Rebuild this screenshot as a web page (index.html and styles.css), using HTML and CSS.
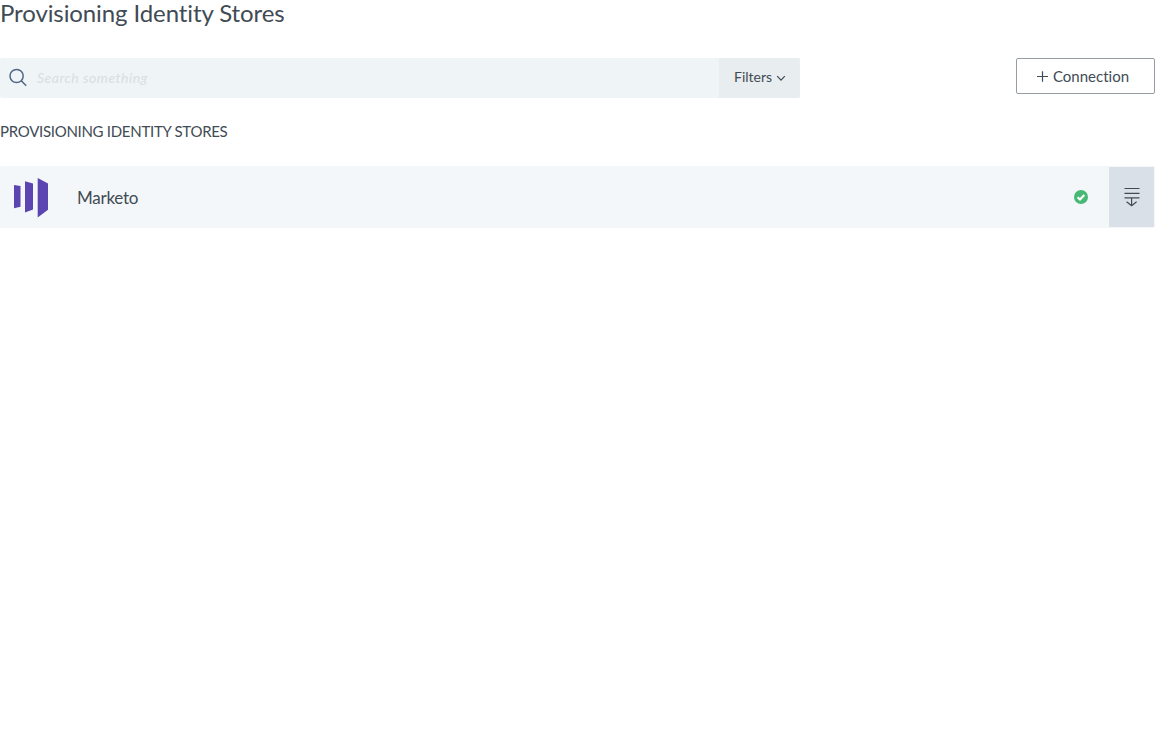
FILE: index.html
```
<!DOCTYPE html>
<html lang="en">
<head>
<meta charset="utf-8">
<title>Provisioning Identity Stores</title>
<link rel="stylesheet" href="styles.css">
</head>
<body>
<main class="page">
  <h1 class="title"><span>Provisioning Identity Stores</span></h1>
  <div class="toolbar">
    <div class="search">
      <svg class="search-icon" width="20" height="20" viewBox="0 0 20 20"><circle cx="7.6" cy="8" r="6.6"/><path d="M12.3 12.8L17.2 17.8"/></svg>
      <input class="search-input" type="text" placeholder="Search something">
      <button class="filters"><span>Filters</span><svg width="10" height="7" viewBox="0 0 10 7"><path d="M1.2 1.2L5 5.2L8.8 1.2"/></svg></button>
    </div>
    <button class="connection"><svg width="12" height="12" viewBox="0 0 12 12"><path d="M6.5 1.2V11.8M1 6.5H12"/></svg><span>Connection</span></button>
  </div>
  <h2 class="section"><span>PROVISIONING IDENTITY STORES</span></h2>
  <div class="row">
    <svg class="logo" width="35" height="40" viewBox="0 0 35 40"><path d="M0 7L6.5 8V28.8L0 30.3ZM11 3.2L19 5.5V31.6L11 34.6ZM23.7 0L34 5.5V31.8L23.7 39.5Z"/></svg>
    <span class="name">Marketo</span>
    <svg class="status" width="14" height="14" viewBox="0 0 14 14"><circle cx="7" cy="7" r="7"/><path d="M3.6 7.2L6 9.5L10.3 5"/></svg>
    <button class="expand" aria-label="Expand"><svg width="16" height="20" viewBox="0 0 16 20"><path d="M.5 1.5H15.5M.5 6.3H15.5M.5 10.8H15.5M7.6 11V18.7M2.6 14.7L7.6 18.8L12.6 14.7"/></svg></button>
  </div>
</main>
</body>
</html>
```
FILE: styles.css
```
* { box-sizing: border-box; }
body { margin: 0; background: #fff; color: #414b54; font-family: Lato, "Open Sans", sans-serif; font-variant-ligatures: none; }
svg { display: block; flex: none; fill: none; stroke: #414b54; stroke-width: 1.2; }
button { font: inherit; font-variant-ligatures: none; color: inherit; padding: 0; cursor: pointer; }
.page { width: 1155px; }
.title { margin: 0; height: 58px; font-size: 24px; line-height: 25px; font-weight: 400; letter-spacing: -.1px; white-space: nowrap; }
.toolbar { display: flex; justify-content: space-between; align-items: flex-start; height: 40px; }
.search { display: flex; align-items: center; width: 800px; height: 40px; padding-left: 9px; background: #eff4f7; border-radius: 2px; overflow: hidden; }
.search-icon { stroke: #506784; stroke-width: 1.5; }
.search-input { flex: 1; min-width: 0; height: 40px; padding: 0 0 2px 8px; border: 0; outline: 0; background: transparent; font: italic 14px Lato, sans-serif; letter-spacing: .5px; }
.search-input::placeholder { color: #d9dee1; opacity: 1; }
.filters { display: flex; align-items: center; gap: 4px; width: 81px; height: 40px; padding: 0 0 4px 15px; border: 0; background: #e8edf0; font-size: 14px; }
.filters svg { margin-top: 5px; }
.connection { display: flex; align-items: center; gap: 5px; width: 139px; height: 36px; padding: 0 0 0 19px; border: 1px solid #979da5; border-radius: 2px; background: #fff; font-size: 15px; }
.section { margin: 24px 0 0; height: 44px; font-size: 15px; line-height: 19px; font-weight: 400; letter-spacing: -.29px; white-space: nowrap; }
.row { display: flex; align-items: center; height: 62px; padding: 0 1px 0 14px; background: #f3f7fa; border-radius: 2px; }
.logo { margin-top: 1px; fill: #5c45b0; stroke: none; }
.name { flex: 1; margin: 1px 0 0 28px; font-size: 17px; letter-spacing: -.25px; }
.status { margin-right: 21px; }
.status circle { fill: #48b975; stroke: none; }
.status path { stroke: #fff; stroke-width: 2.2; }
.expand { display: flex; align-items: center; justify-content: center; width: 45px; height: 60px; border: 0; background: #d9e0e7; }
.expand svg { margin-top: -1px; }
```
